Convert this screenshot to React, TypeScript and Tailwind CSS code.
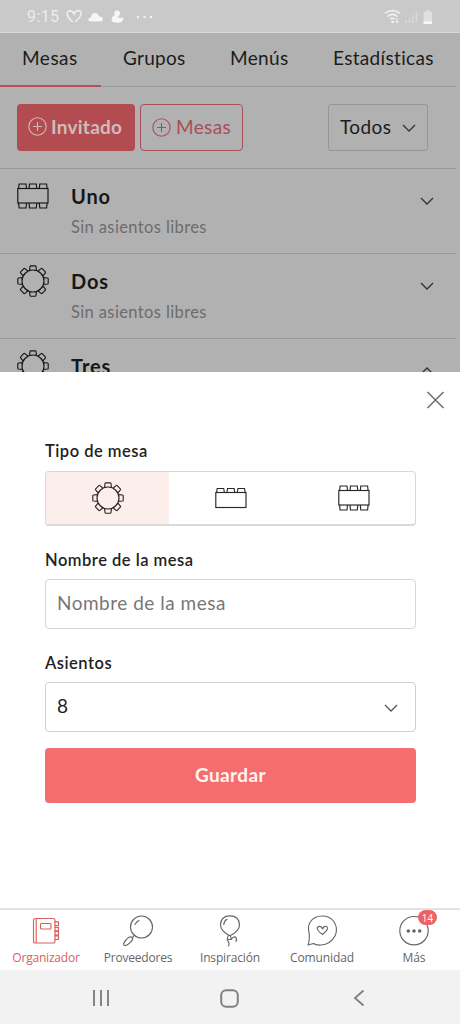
import type { ReactNode } from "react";

type TableKind = "round" | "single" | "double";

const SEATS = [0, 45, 90, 135, 180, 225, 270, 315];

function TableIcon({ kind }: { kind: TableKind }) {
  return (
    <svg width="32" height="32" viewBox="0 0 32 32" fill="none" stroke="currentColor" strokeWidth="1.15" className="block shrink-0">
      {kind === "round" && (
        <>
          <circle cx="16" cy="16" r="11" />
          {SEATS.map((a) => (
            <path key={a} d="M12.6 5.3 L13 1.5 Q13.1 .8 13.8 .8 H18.2 Q18.9 .8 19 1.5 L19.4 5.3" transform={`rotate(${a} 16 16)`} />
          ))}
        </>
      )}
      {kind === "single" && (
        <>
          <rect x=".8" y="10.5" width="30.2" height="15" />
          <path d="M1.5 10.5 L2.2 6.5 H8.7 L9.4 10.5 M11.9 10.5 L12.6 6.5 H19.1 L19.8 10.5 M22.3 10.5 L23 6.5 H29.5 L30.2 10.5" />
        </>
      )}
      {kind === "double" && (
        <>
          <rect x=".8" y="8.5" width="30.2" height="14.5" />
          <path d="M1.6 8.5 L2.1 4 H9 L9.5 8.5 M12 8.5 L12.5 4 H19.3 L19.8 8.5 M22.3 8.5 L22.8 4 H29.6 L30.1 8.5" />
          <path d="M1.6 23 L2.1 28 H9 L9.5 23 M12 23 L12.5 28 H19.3 L19.8 23 M22.3 23 L22.8 28 H29.6 L30.1 23" />
        </>
      )}
    </svg>
  );
}

function Chevron({ up = false }: { up?: boolean }) {
  return (
    <svg width="14" height="8" viewBox="0 0 14 8" fill="none" stroke="currentColor" strokeWidth="1.3" className={up ? "block rotate-180" : "block"}>
      <path d="M1 1 L7 7 L13 1" />
    </svg>
  );
}

function PlusCircle() {
  return (
    <svg width="19" height="19" viewBox="0 0 19 19" fill="none" stroke="currentColor" strokeWidth="1.1" className="block shrink-0">
      <circle cx="9.5" cy="9.5" r="8.7" />
      <path d="M5 9.5 H14 M9.5 5 V14" />
    </svg>
  );
}

function StatusBar() {
  return (
    <div className="flex h-[33px] shrink-0 items-center border-b border-[#dadada] bg-[#c9c9c9] pt-px pl-[27px] pr-[25px] text-white">
      <span className="w-[33px] font-['Roboto'] text-[16px] leading-4 tracking-[0.4px] text-[#ececec]">9:15</span>
      <svg className="ml-[6px]" width="17" height="15" viewBox="0 0 17 15" fill="none" stroke="#efefef" strokeWidth="1.5">
        <path d="M7 13 Q2 9.5 1.3 5.5 Q1 2 4 1.7 Q7 1.8 8 5 Q9.2 1.8 12.2 1.5 Q15.7 2 15.2 5.5 Q13.5 9.5 9 13" />
      </svg>
      <svg className="ml-[5px]" width="15" height="10" viewBox="0 0 15 10" fill="#f6f6f6">
        <path d="M3 9.5 Q0 9.5 .2 7.3 Q.8 5.3 3 5.5 Q3.3 1 7 1 Q10.5 1 11 4.4 Q14.8 4.4 14.8 7.2 Q14.6 9.5 12.5 9.5 Z" />
      </svg>
      <svg className="ml-[8px]" width="13" height="13" viewBox="0 0 13 13" fill="#f6f6f6">
        <circle cx="6.2" cy="3.2" r="2.8" />
        <path d="M3.5 5 L7.6 5.2 L7 8 L12.5 7.5 Q12.5 12.8 6.5 12.8 Q.5 12.8 .5 9.5 Q.5 7 3.5 5 Z" />
      </svg>
      <svg className="ml-[12px]" width="17" height="4" viewBox="0 0 17 4" fill="#f3f3f3">
        <circle cx="2" cy="2" r="1.2" />
        <circle cx="8.5" cy="2" r="1.2" />
        <circle cx="15" cy="2" r="1.2" />
      </svg>
      <svg className="ml-auto" width="51" height="16" viewBox="0 0 51 16" fill="none">
        <path d="M1 4.5 Q8.5 -1.5 16 4.5 M3.5 7.5 Q8.5 3.4 13.5 7.5 M6 10.2 Q8.5 8.3 11 10.2" stroke="#f2f2f2" strokeWidth="1.6" />
        <path d="M6.5 12 H10.5 L8.5 14.5 Z" fill="#f2f2f2" />
        <path d="M13 9 V14 M11.5 12.5 L13 14 L14.5 12.5" stroke="#f2f2f2" />
        <path d="M22 14 V11 M25.5 14 V9 M29 14 V6.5 M32.5 14 V3.5" stroke="#d8d8d8" strokeWidth="1.8" />
        <path d="M39.5 4 Q39.5 3 40.5 3 H42 V1.5 H46 V3 H47 Q48 3 48 4 V15 H39.5 Z" fill="#e0e0e0" />
        <path d="M39.5 12.5 H48 V15 H39.5 Z" fill="#f8f8f8" />
      </svg>
    </div>
  );
}

function Row({ kind, name, note, open = false }: { kind: TableKind; name: string; note?: string; open?: boolean }) {
  return (
    <div className="mr-1 flex h-[85px] shrink-0 border-b border-[#989898] pl-[17px] pr-[22px]">
      <div className="pt-[11px] text-[#151515]">
        <TableIcon kind={kind} />
      </div>
      <div className="ml-[22px] pt-[15px]">
        <p className="text-[20px] leading-6 font-bold tracking-[0.9px] text-[#171717]">{name}</p>
        {note && <p className="mt-[9px] text-[16.5px] leading-5 tracking-[0.38px] text-[#6c6c6c]">{note}</p>}
      </div>
      <div className="ml-auto pt-[28px] text-[#303030]">
        <Chevron up={open} />
      </div>
    </div>
  );
}

function Label({ children }: { children: ReactNode }) {
  return <p className="text-[16.5px] leading-5 font-semibold tracking-[0.5px] text-[#222]">{children}</p>;
}

function NavItem({ label, spacing, active = false, children }: { label: string; spacing: string; active?: boolean; children: ReactNode }) {
  return (
    <div className={`flex w-[92px] flex-col items-center pt-[5px] ${active ? "text-[#d8605f]" : "text-[#666]"}`}>
      <svg width="40" height="34" viewBox="0 0 40 34" fill="none" stroke="currentColor" strokeWidth="1.15" strokeLinecap="round" strokeLinejoin="round">
        {children}
      </svg>
      <span className={`mt-px font-['Open_Sans'] text-[12px] leading-4 whitespace-nowrap ${spacing}`}>{label}</span>
    </div>
  );
}

export default function App() {
  return (
    <div className="flex h-[1024px] w-[460px] flex-col overflow-hidden bg-white font-['Lato',sans-serif]">
      <div className="flex h-[372px] shrink-0 flex-col overflow-hidden bg-[#b1b1b1]">
        <StatusBar />
        <div className="mr-1 flex h-[54px] shrink-0 border-b border-[#989898] text-[19px] leading-[50px] text-[#1c1c1c]">
          <span className="h-[54px] w-[101px] border-b-2 border-[#b65054] pl-[22px] tracking-[0.5px]">Mesas</span>
          <span className="w-[108px] pl-[22px] tracking-[0.25px]">Grupos</span>
          <span className="w-[102px] pl-[21px] tracking-[0.35px]">Menús</span>
          <span className="pl-[22px] tracking-[0.33px]">Estadísticas</span>
        </div>
        <div className="mr-1 flex h-[82px] shrink-0 border-b border-[#989898] pt-[17px] pr-[28px] pl-[17px]">
          <div className="flex h-[47px] w-[118px] items-center gap-[4px] rounded-[4px] bg-[#b34c50] pl-[11px] text-[19px] font-bold text-[#cebcbc]">
            <span className="-mt-[2px]">
              <PlusCircle />
            </span>
            <span className="tracking-[0.25px]">Invitado</span>
          </div>
          <div className="ml-[5px] flex h-[47px] w-[103px] items-center gap-[5px] rounded-[4px] border border-[#a94e56] pl-[11px] text-[19px] text-[#a94e56]">
            <PlusCircle />
            <span className="tracking-[0.35px]">Mesas</span>
          </div>
          <div className="ml-auto flex h-[47px] w-[100px] items-center rounded-[3px] border border-[#969696] pl-[11px] text-[19px] text-[#1c1c1c]">
            <span className="tracking-[0.4px]">Todos</span>
            <span className="ml-auto pr-[11px] text-[#333]">
              <Chevron />
            </span>
          </div>
        </div>
        <Row kind="double" name="Uno" note="Sin asientos libres" />
        <Row kind="round" name="Dos" note="Sin asientos libres" />
        <Row kind="round" name="Tres" open />
      </div>

      <div className="flex h-[536px] shrink-0 flex-col pt-[19px] pr-[44px] pl-[45px]">
        <svg className="-mr-[29px] self-end" width="19" height="18" viewBox="0 0 19 18" fill="none" stroke="#6d6d6d" strokeWidth="1.5">
          <path d="M1.5 1 L17.5 17 M17.5 1 L1.5 17" />
        </svg>
        <div className="mt-[32px]">
          <Label>Tipo de mesa</Label>
        </div>
        <div className="mt-[10px] grid h-[55px] grid-cols-3 overflow-hidden rounded-[4px] border border-b-2 border-[#d9d9d9] text-[#2c2626]">
          <div className="flex items-center justify-center bg-[#fbeeeb]">
            <TableIcon kind="round" />
          </div>
          <div className="flex items-center justify-center">
            <TableIcon kind="single" />
          </div>
          <div className="flex items-center justify-center">
            <TableIcon kind="double" />
          </div>
        </div>
        <div className="mt-[24px]">
          <Label>Nombre de la mesa</Label>
        </div>
        <div className="mt-[9px] h-[50px] rounded-[4px] border border-[#d6d6d6] pl-[11px] text-[19px] leading-[46px] tracking-[0.5px] text-[#777]">Nombre de la mesa</div>
        <div className="mt-[24px]">
          <Label>Asientos</Label>
        </div>
        <div className="mt-[9px] flex h-[50px] items-center justify-between rounded-[4px] border border-[#d0d0d0] pr-[17px] pl-[11px] text-[19px] text-[#222]">
          <span className="-mt-[2px]">8</span>
          <span className="pt-[2px] text-[#555]">
            <Chevron />
          </span>
        </div>
        <div className="mt-[16px] flex h-[55px] items-center justify-center rounded-[4px] bg-[#f66d70] text-[19px] font-bold tracking-[0.4px] text-[#fff5ee]">Guardar</div>
      </div>

      <div className="flex h-[62px] shrink-0 border-t-2 border-[#e3e3e3] bg-white">
        <NavItem label="Organizador" spacing="tracking-[-0.2px]" active>
          <path d="M10.5 3.5 H27 Q29 3.5 29 5.5 V25.5 Q29 28 27 28 H9 Q7.5 28 7.5 26 V5.5 Q7.5 3.5 9.5 3.5 M10.2 3.5 V28" />
          <rect x="14.5" y="8.5" width="10.5" height="5.5" rx="1" />
          <path d="M29 6.8 H32.5 V10.5 H29 M29 12.3 H32.5 V15.8 H29 M29 16.5 H32.5 V20 H29 M29 21 H32.5 V24.5 H29" />
        </NavItem>
        <NavItem label="Proveedores" spacing="tracking-[-0.2px]">
          <circle cx="23.5" cy="12" r="11" />
          <path d="M17 9.5 Q18.5 6.3 21 5.6 M16.2 20.2 L14.2 23.2 M14.3 22.5 Q11.5 20.5 8.5 24.5 Q4.5 28.8 6 30.3 Q8.5 31.5 12 27.7 Q15.7 24.3 14.3 22.5" />
        </NavItem>
        <NavItem label="Inspiración" spacing="tracking-[-0.15px]">
          <path d="M20 20.8 Q10.5 16 10.5 10 Q10.8 .9 20 .9 Q29.2 .9 29.5 10 Q29.5 16 20 20.8 M13.8 9.5 Q14 6 17 4.3 M18 20.8 L17.2 24.5 H21.2 L20.5 20.8 M21.2 24.5 Q24 20.5 26 22.5 Q27 24.5 26 26.5 M17.2 24.5 Q20 29 18.5 31" />
        </NavItem>
        <NavItem label="Comunidad" spacing="tracking-[-0.1px]">
          <path d="M7.2 18.5 Q5.2 12 8.2 7 Q12.2 1 20 1 Q27.5 1 31.5 6 Q36.5 13 33.2 20.5 Q28.5 29.5 19 30 Q14 30.4 11.5 28.5 L6 30 Q7.7 26 7.2 18.5" />
          <path d="M20.5 19.5 Q15.5 15.7 15.2 13.5 Q15.3 11.3 17.5 11.3 Q19.8 11.3 20.5 14 Q21.4 11.3 23.5 11.3 Q25.8 11.5 25.5 13.7 Q25 15.8 20.5 19.5" />
        </NavItem>
        <div className="relative">
          <NavItem label="Más" spacing="tracking-[0px]">
            <circle cx="20" cy="15.7" r="14.2" />
            <g fill="currentColor" stroke="none">
              <circle cx="14.3" cy="16" r="1.8" />
              <circle cx="20" cy="16" r="1.8" />
              <circle cx="25.7" cy="16" r="1.8" />
            </g>
          </NavItem>
          <span className="absolute top-0 left-[50px] flex h-[15px] w-[19px] items-center justify-center rounded-full bg-[#ed6364] font-['Open_Sans'] text-[10px] leading-none text-white">14</span>
        </div>
      </div>
      <div className="flex h-[54px] shrink-0 items-center bg-[#f2f2f2] pt-[2px] text-[#808080]">
        <svg className="ml-[92px]" width="18" height="18" viewBox="0 0 18 18" stroke="currentColor" strokeWidth="1.9">
          <path d="M2 1 V17 M9 1 V17 M16 1 V17" />
        </svg>
        <svg className="ml-[110px]" width="19" height="19" viewBox="0 0 19 19" fill="none" stroke="currentColor" strokeWidth="2">
          <rect x="1.2" y="1.2" width="16.6" height="16.6" rx="5" />
        </svg>
        <svg className="ml-[114px]" width="12" height="18" viewBox="0 0 12 18" fill="none" stroke="currentColor" strokeWidth="1.9">
          <path d="M10.5 1.5 L2 9 L10.5 16.5" />
        </svg>
      </div>
    </div>
  );
}
